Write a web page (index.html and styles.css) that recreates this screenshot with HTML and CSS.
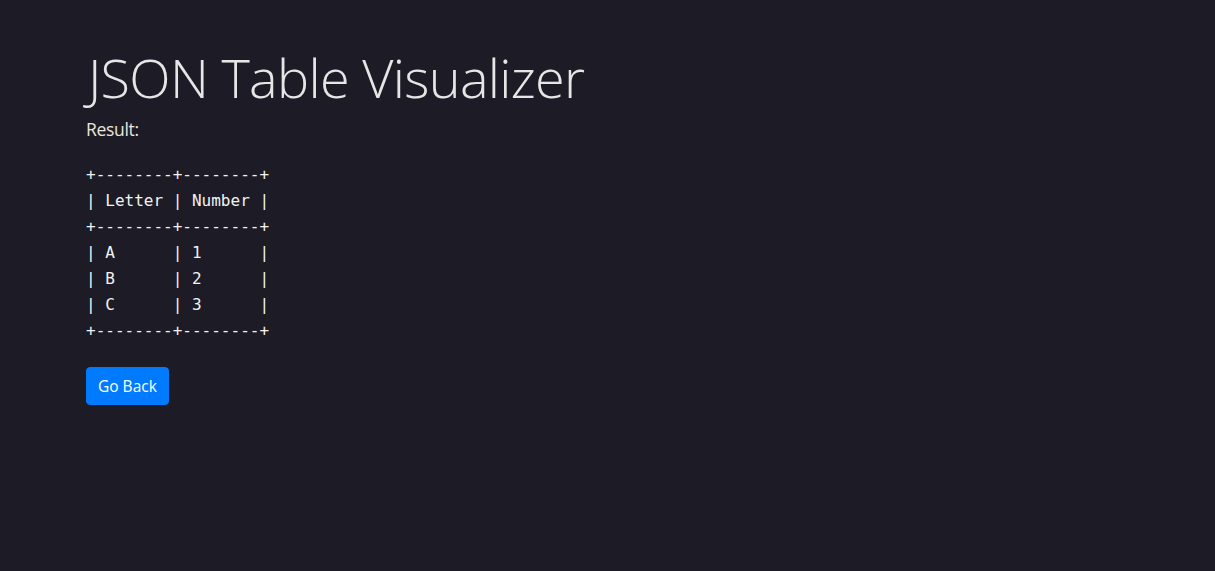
FILE: index.html
```html
<!DOCTYPE html>
<html lang="en">
<head>
<meta charset="utf-8">
<title>JSON Table Visualizer</title>
<link rel="stylesheet" href="styles.css">
</head>
<body>
<main class="container">
  <h1 class="title">JSON Table Visualizer</h1>
  <p class="label">Result:</p>
  <pre class="result">+--------+--------+
| Letter | Number |
+--------+--------+
| A      | 1      |
| B      | 2      |
| C      | 3      |
+--------+--------+</pre>
  <button class="btn" type="button">Go Back</button>
</main>
</body>
</html>
```
FILE: styles.css
```css
html, body {
  margin: 0;
  padding: 0;
  height: 100%;
}
body {
  background: #1c1b26;
  color: #e8e6e3;
  font-family: "Open Sans", "Noto Sans", sans-serif;
}
.container {
  padding: 41px 86px 0;
  display: flex;
  flex-direction: column;
  align-items: flex-start;
}
.title {
  margin: 0 0 0 2px;
  font-weight: 300;
  font-size: 54px;
  line-height: 72px;
  color: #e6e6e6;
  letter-spacing: -0.7px;
}
.label {
  margin: 3px 0 0;
  font-size: 17.5px;
  font-weight: 400;
  line-height: 26px;
  color: #ece6da;
  letter-spacing: -0.3px;
}
.result {
  margin: 20px 0 0;
  font-family: "DejaVu Sans Mono", "Liberation Mono", monospace;
  font-size: 16px;
  line-height: 26px;
  color: #f2f2f2;
}
.btn {
  margin-top: 23px;
  background: #007bff;
  color: #fff;
  border: 1px solid #007bff;
  border-radius: 4px;
  padding: 6px 11px;
  font-family: "Open Sans", "Noto Sans", sans-serif;
  font-size: 15.5px;
  line-height: 24px;
}
```
